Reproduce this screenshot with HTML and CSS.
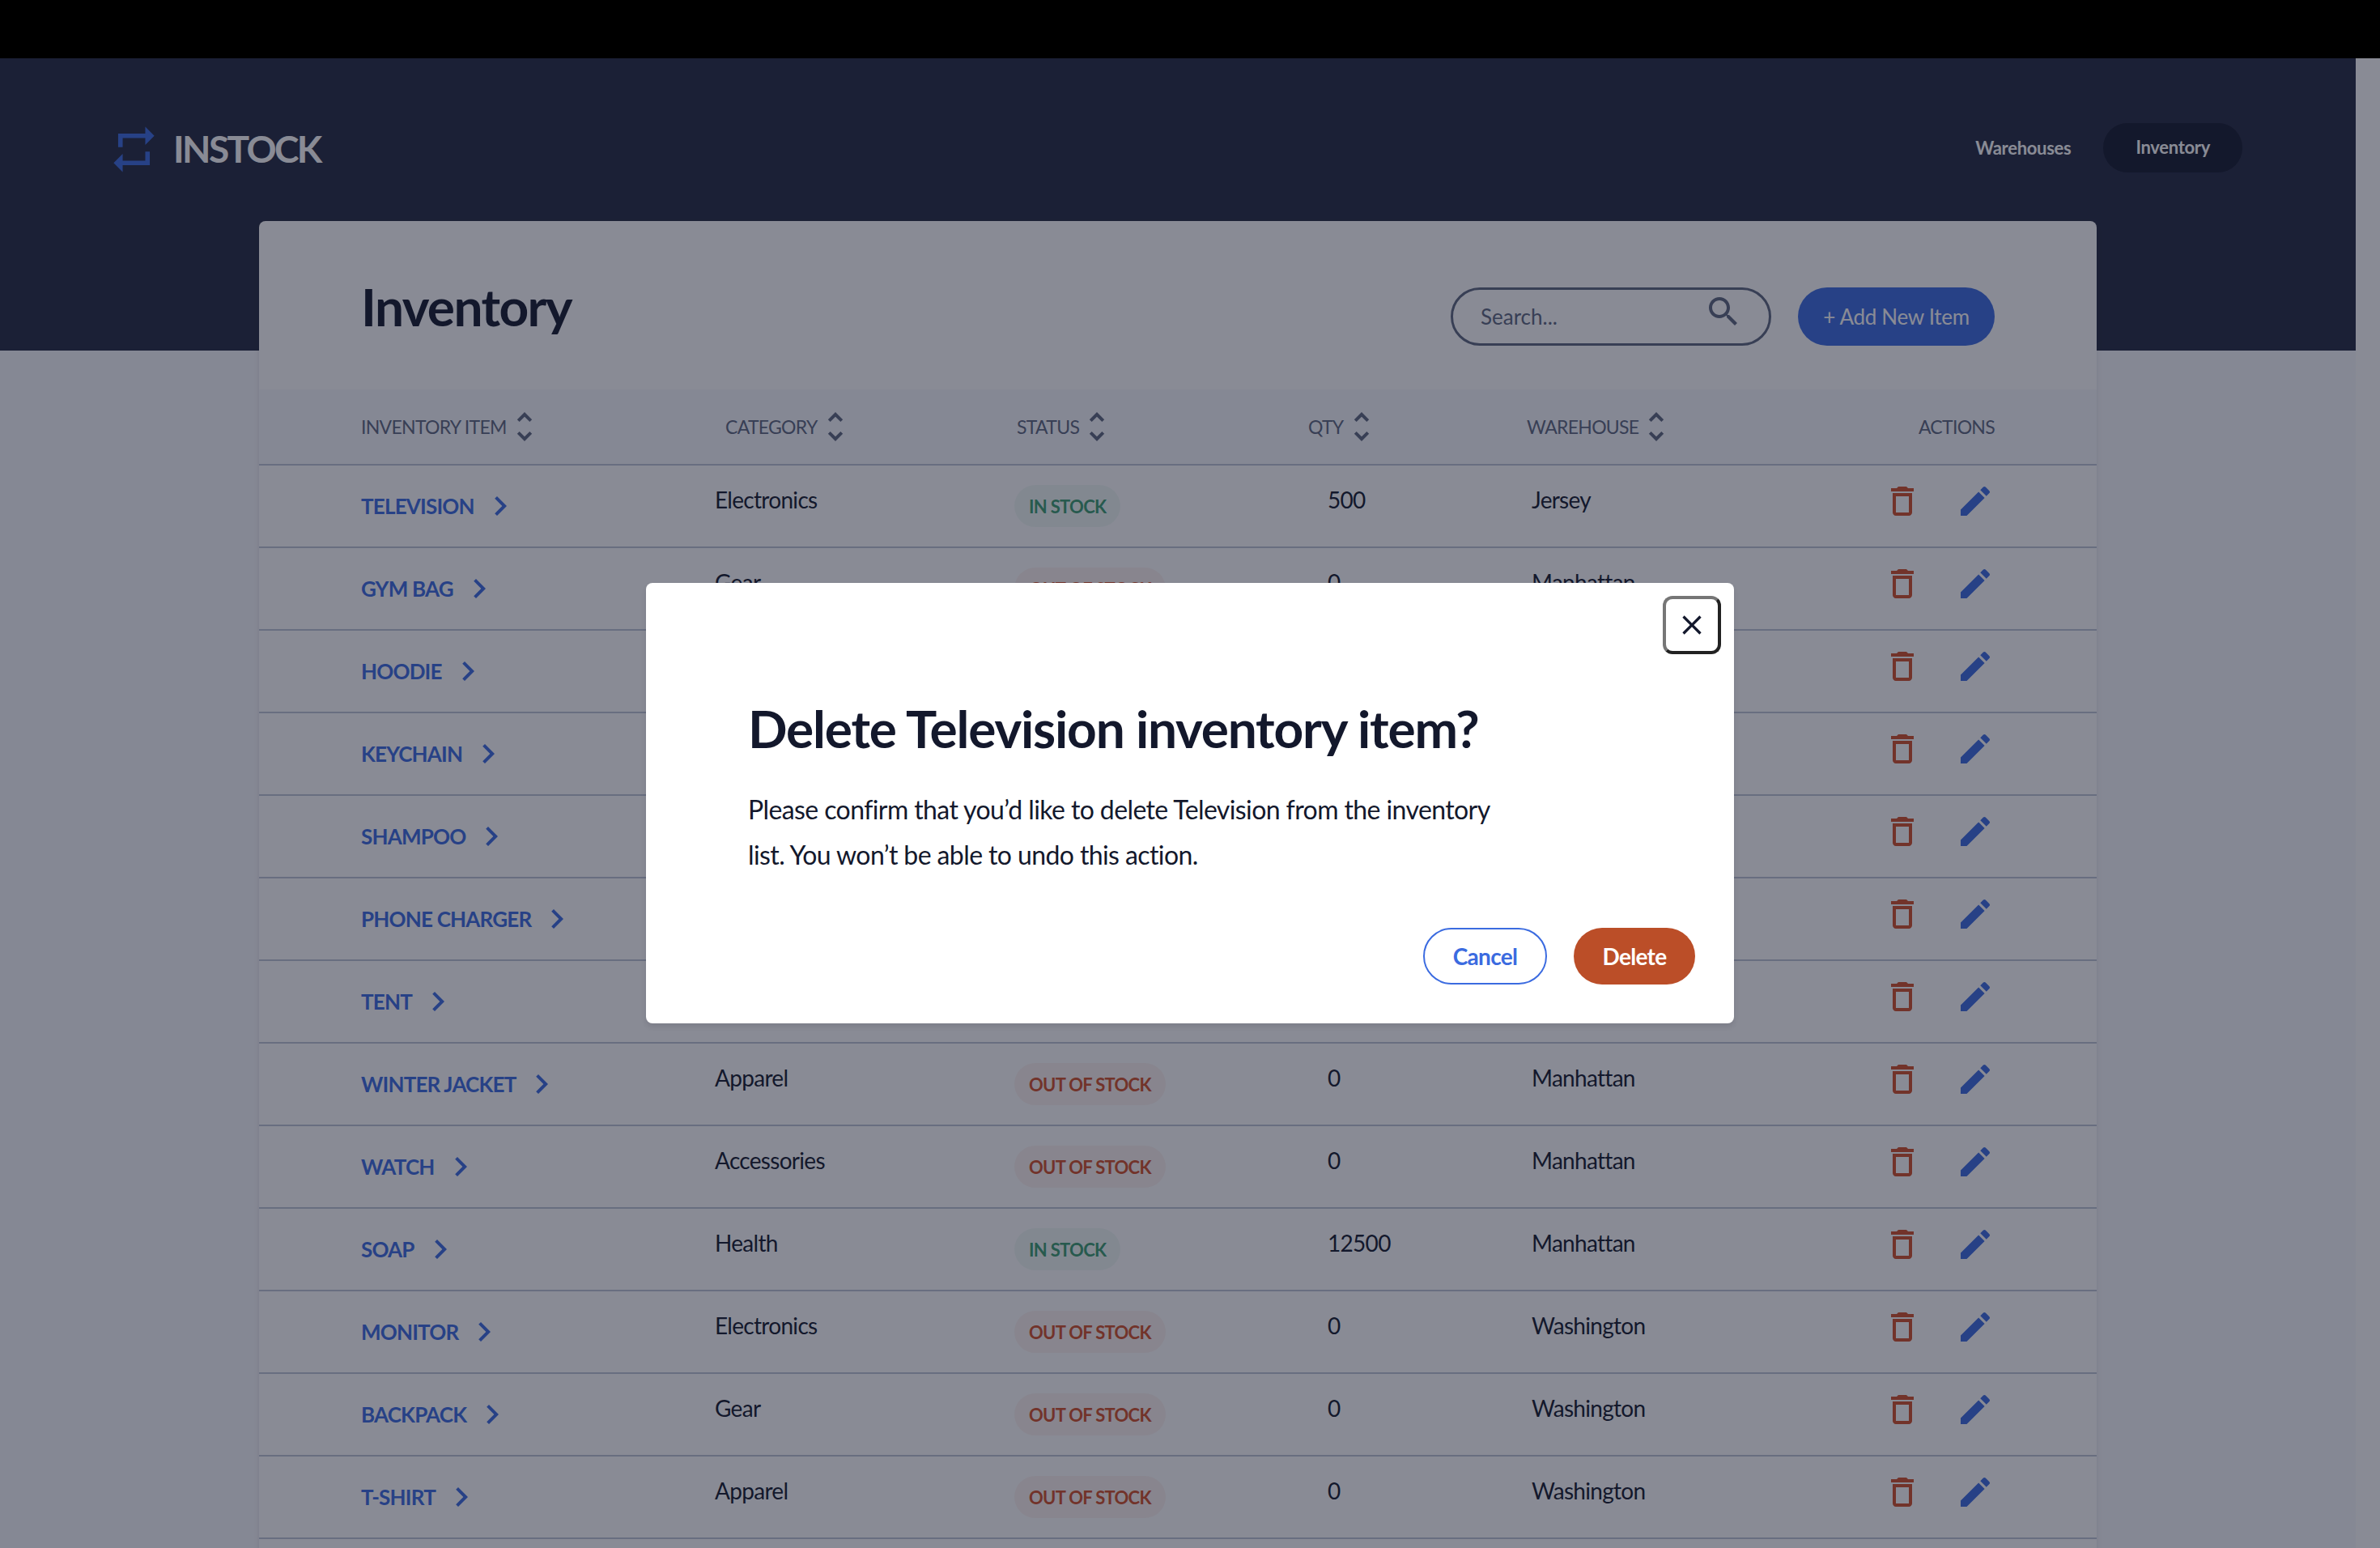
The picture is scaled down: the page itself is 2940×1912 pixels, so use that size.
FILE: index.html
```html
<!DOCTYPE html>
<html lang="en">
<head>
    <meta charset="UTF-8">
    <title>InStock</title>
    <link rel="stylesheet" href="styles.css">
</head>
<body>
    <div class="mac-bar"></div>
    <div class="window">
        <div class="page">
            <header class="header">
                <div class="logo">
                    <svg class="logo-icon" viewBox="0 0 24 24"><path d="M7 7h10v3l4-4-4-4v3H5v6h2V7zm10 10H7v-3l-4 4 4 4v-3h12v-6h-2v4z"/></svg>
                    <span class="logo-text">INSTOCK</span>
                </div>
                <nav class="nav">
                    <a class="nav-link">Warehouses</a>
                    <a class="nav-link nav-active">Inventory</a>
                </nav>
            </header>
            <main class="card">
                <div class="card-top">
                    <h1>Inventory</h1>
                    <div class="tools">
                        <div class="search">
                            <span>Search...</span>
                            <svg viewBox="0 0 24 24"><path d="M15.5 14h-.79l-.28-.27C15.41 12.59 16 11.11 16 9.5 16 5.91 13.09 3 9.5 3S3 5.91 3 9.5 5.91 16 9.5 16c1.61 0 3.09-.59 4.23-1.57l.27.28v.79l5 4.99L20.49 19l-4.99-5zm-6 0C7.01 14 5 11.99 5 9.5S7.01 5 9.5 5 14 7.01 14 9.5 11.99 14 9.5 14z"/></svg>
                        </div>
                        <button class="add-btn">+ Add New Item</button>
                    </div>
                </div>
                <div class="table-head" id="tableHead"></div>
                <div id="rows"></div>
            </main>
        </div>
        <div class="scroll-strip"></div>
        <div class="overlay">
            <div class="modal">
                <button class="close-btn">
                    <svg viewBox="0 0 24 24"><path d="M19 6.41L17.59 5 12 10.59 6.41 5 5 6.41 10.59 12 5 17.59 6.41 19 12 13.41 17.59 19 19 17.59 13.41 12z"/></svg>
                </button>
                <h2>Delete Television inventory item?</h2>
                <p>Please confirm that you’d like to delete Television from the inventory list. You won’t be able to undo this action.</p>
                <div class="modal-btns">
                    <button class="cancel-btn">Cancel</button>
                    <button class="delete-btn">Delete</button>
                </div>
            </div>
        </div>
    </div>
    <script src="app.js"></script>
</body>
</html>
```

FILE: styles.css
```css
* {
    box-sizing: border-box;
}
body {
    margin: 0;
    height: 1912px;
    overflow: hidden;
    font-family: "Lato", "Liberation Sans", sans-serif;
    background-color: #000;
    color: #13182c;
}
h1, h2, p {
    margin: 0;
}
.mac-bar {
    height: 72px;
    background-color: #000;
}
.window {
    position: relative;
    display: flex;
    height: 1840px;
    overflow: hidden;
    background-color: #f7f8fc;
}
.page {
    flex: 1;
    min-width: 0;
}
.scroll-strip {
    width: 30px;
    background-color: #fff;
}
.header {
    display: flex;
    justify-content: space-between;
    align-items: flex-start;
    height: 361px;
    padding: 79px 140px 0 132px;
    background-color: #232940;
}
.logo {
    display: flex;
    align-items: center;
    gap: 15px;
}
.logo-icon {
    width: 67px;
    height: 67px;
    fill: #3b6be0;
}
.logo-text {
    margin-top: -3px;
    font-size: 46px;
    font-weight: 700;
    letter-spacing: -2.6px;
    color: #fff;
}
.nav {
    display: flex;
    align-items: center;
    gap: 40px;
    margin-top: 1px;
}
.nav-link {
    font-size: 22px;
    font-weight: 700;
    letter-spacing: -0.3px;
    color: #fff;
}
.nav-active {
    padding: 16px 40px;
    height: 61px;
    border-radius: 30px;
    background-color: #13182c;
}
.card {
    margin: -160px 0 0 320px;
    width: 2270px;
    background-color: #fff;
    border-radius: 8px;
    box-shadow: 0 4px 6px rgba(19, 24, 44, 0.1);
}
.card-top {
    display: flex;
    justify-content: space-between;
    height: 208px;
    padding: 82px 126px 0;
}
.card-top h1 {
    font-size: 64px;
    font-weight: 700;
    line-height: 76px;
    letter-spacing: -1.6px;
    margin-top: -14px;
}
.tools {
    display: flex;
    gap: 33px;
}
.search {
    display: flex;
    justify-content: space-between;
    align-items: center;
    width: 396px;
    height: 72px;
    padding: 0 32px 0 34px;
    border: 3px solid #5c667e;
    border-radius: 36px;
    font-size: 26px;
    color: #5c667e;
}
.search svg {
    width: 48px;
    height: 48px;
    fill: #5c667e;
    margin-top: -12px;
}
.add-btn {
    width: 243px;
    height: 72px;
    border: none;
    border-radius: 36px;
    background-color: #3b6be0;
    color: #fff;
    font-family: inherit;
    font-size: 26px;
    letter-spacing: -0.3px;
}
.table-head {
    display: grid;
    grid-template-columns: 450px 360px 360px 270px 1fr auto;
    align-items: center;
    height: 94px;
    padding: 0 126px;
    background-color: #f7f8fc;
    border-bottom: 2px solid #bdc5d5;
    font-size: 23px;
    letter-spacing: -0.7px;
    color: #5c667e;
}
.head-cell {
    display: flex;
    align-items: center;
}
.head-cell svg {
    width: 48px;
    height: 48px;
    fill: #5c667e;
    margin-left: -2px;
}
.row {
    display: grid;
    grid-template-columns: 437px 370px 387px 252px 1fr auto;
    align-items: center;
    height: 102px;
    padding: 0 126px;
    border-bottom: 2px solid #bdc5d5;
    font-size: 28px;
    letter-spacing: -0.7px;
}
.item-link {
    display: flex;
    align-items: center;
    font-size: 26px;
    font-weight: 700;
    letter-spacing: -0.8px;
    color: #3b6be0;
}
.item-link svg {
    width: 48px;
    height: 48px;
    fill: #3b6be0;
    margin-left: 8px;
}
.plain {
    margin-top: -16px;
}
.pill {
    justify-self: start;
    padding: 0 18px;
    height: 52px;
    line-height: 54px;
    border-radius: 26px;
    font-size: 22px;
    font-weight: 700;
    letter-spacing: -0.7px;
}
.pill-in {
    color: #3a9c70;
    background-color: rgba(63, 168, 120, 0.07);
}
.pill-out {
    color: #d04e28;
    background-color: rgba(208, 78, 40, 0.07);
}
.actions {
    display: flex;
    gap: 42px;
    margin-top: -12px;
}
.actions svg {
    width: 48px;
    height: 48px;
}
.icon-trash {
    fill: #d04e28;
}
.icon-edit {
    fill: #3b6be0;
}
.overlay {
    position: absolute;
    inset: 0;
    display: flex;
    align-items: center;
    justify-content: center;
    background-color: rgba(19, 24, 44, 0.5);
}
.modal {
    position: relative;
    width: 1344px;
    height: 544px;
    padding: 142px 126px 0;
    background-color: #fff;
    border-radius: 8px;
    box-shadow: 0 4px 6px rgba(19, 24, 44, 0.1);
}
.modal h2 {
    font-size: 64px;
    font-weight: 700;
    line-height: 76px;
    letter-spacing: -1.2px;
    white-space: nowrap;
}
.modal p {
    width: 960px;
    margin-top: 34px;
    font-size: 32px;
    line-height: 56px;
    letter-spacing: -0.6px;
}
.close-btn {
    position: absolute;
    top: 16px;
    right: 16px;
    display: flex;
    align-items: center;
    justify-content: center;
    width: 72px;
    height: 72px;
    padding: 0;
    background-color: #fff;
    border: 4px solid;
    border-color: #767676 #222 #222 #767676;
    border-radius: 12px;
}
.close-btn svg {
    width: 40px;
    height: 40px;
    fill: #13182c;
}
.modal-btns {
    position: absolute;
    right: 48px;
    bottom: 48px;
    display: flex;
    gap: 33px;
}
.modal-btns button {
    height: 70px;
    border-radius: 35px;
    font-family: inherit;
    font-size: 28px;
    font-weight: 700;
    letter-spacing: -0.7px;
}
.cancel-btn {
    width: 153px;
    background-color: #fff;
    border: 2px solid #3b6be0;
    color: #3b6be0;
}
.delete-btn {
    width: 150px;
    background-color: #bb4e28;
    border: none;
    color: #fff;
}
```

FILE: app.js
```js
const headers = ['INVENTORY ITEM', 'CATEGORY', 'STATUS', 'QTY', 'WAREHOUSE'];

const items = [
    ['TELEVISION', 'Electronics', 'IN STOCK', '500', 'Jersey'],
    ['GYM BAG', 'Gear', 'OUT OF STOCK', '0', 'Manhattan'],
    ['HOODIE', 'Apparel', 'OUT OF STOCK', '0', 'Manhattan'],
    ['KEYCHAIN', 'Accessories', 'IN STOCK', '2000', 'Manhattan'],
    ['SHAMPOO', 'Health', 'IN STOCK', '4350', 'Manhattan'],
    ['PHONE CHARGER', 'Electronics', 'IN STOCK', '10000', 'Manhattan'],
    ['TENT', 'Gear', 'IN STOCK', '800', 'Manhattan'],
    ['WINTER JACKET', 'Apparel', 'OUT OF STOCK', '0', 'Manhattan'],
    ['WATCH', 'Accessories', 'OUT OF STOCK', '0', 'Manhattan'],
    ['SOAP', 'Health', 'IN STOCK', '12500', 'Manhattan'],
    ['MONITOR', 'Electronics', 'OUT OF STOCK', '0', 'Washington'],
    ['BACKPACK', 'Gear', 'OUT OF STOCK', '0', 'Washington'],
    ['T-SHIRT', 'Apparel', 'OUT OF STOCK', '0', 'Washington'],
    ['QUADCOPTER', 'Electronics', 'OUT OF STOCK', '0', 'Washington']
];

const sortIcon = '<svg viewBox="0 0 24 24"><path d="M12 5.83L15.17 9l1.41-1.41L12 3 7.41 7.59 8.83 9 12 5.83zm0 12.34L8.83 15l-1.41 1.41L12 21l4.59-4.59L15.17 15 12 18.17z"/></svg>';
const chevron = '<svg viewBox="0 0 24 24"><path d="M10 6L8.59 7.41 13.17 12l-4.58 4.59L10 18l6-6z"/></svg>';
const trash = '<svg class="icon-trash" viewBox="0 0 24 24"><path d="M6 19c0 1.1.9 2 2 2h8c1.1 0 2-.9 2-2V7H6v12zM8 9h8v10H8V9zm7.5-5l-1-1h-5l-1 1H5v2h14V4z"/></svg>';
const edit = '<svg class="icon-edit" viewBox="0 0 24 24"><path d="M3 17.25V21h3.75L17.81 9.94l-3.75-3.75L3 17.25zM20.71 7.04c.39-.39.39-1.02 0-1.41l-2.34-2.34c-.39-.39-1.02-.39-1.41 0l-1.83 1.83 3.75 3.75 1.83-1.83z"/></svg>';

document.getElementById('tableHead').innerHTML =
    headers.map(h => `<div class="head-cell">${h}${sortIcon}</div>`).join('') +
    '<div class="head-cell">ACTIONS</div>';

document.getElementById('rows').innerHTML = items.map(item => `
    <div class="row">
        <a class="item-link">${item[0]}${chevron}</a>
        <div class="plain">${item[1]}</div>
        <span class="pill ${item[2] === 'IN STOCK' ? 'pill-in' : 'pill-out'}">${item[2]}</span>
        <div class="plain">${item[3]}</div>
        <div class="plain">${item[4]}</div>
        <div class="actions">${trash}${edit}</div>
    </div>`).join('');
```
